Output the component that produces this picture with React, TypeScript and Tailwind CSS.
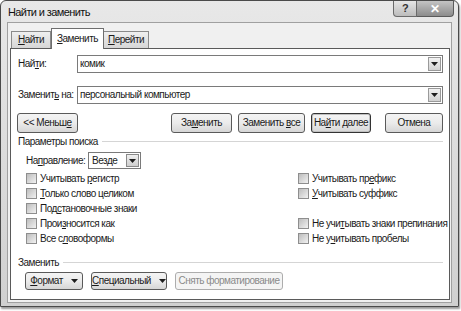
import React from 'react';

const U = ({ children }: { children: React.ReactNode }) => <span className="underline underline-offset-[1px]">{children}</span>;

// кнопка в стиле Windows 7
const Btn = ({
  w,
  h = 'h-[20px]',
  children,
  primary,
  disabled,
}: {
  w: string;
  h?: string;
  children: React.ReactNode;
  primary?: boolean;
  disabled?: boolean;
}) => (
  <div
    className={`${w} ${h} flex items-center justify-center rounded-[3px] border ${
      primary ? 'border-[#333] shadow-[inset_0_0_0_1px_#c0c0c0]' : disabled ? 'border-[#adadad]' : 'border-[#5a5a5a]'
    } ${disabled ? 'bg-[#f4f4f4] text-[#8a8a8a]' : 'bg-gradient-to-b from-[#f4f4f4] via-[#ebebeb] to-[#d6d6d6] text-[#1a1a1a]'}`}
  >
    {children}
  </div>
);

const Check = ({ children }: { children: React.ReactNode }) => (
  <div className="h-[15px] flex items-center gap-[3px]">
    <div className="w-[11px] h-[11px] border border-[#8e8e8e] bg-gradient-to-br from-[#bdbdbd] to-[#f2f2f2]" />
    <span>{children}</span>
  </div>
);

const Arrow = () => (
  <svg width="7" height="4" viewBox="0 0 7 4">
    <path d="M0 0h7L3.5 4z" fill="#1e1e1e" />
  </svg>
);

const Combo = ({ value }: { value: string }) => (
  <div className="flex-1 h-[18px] border border-[#7a7a7a] bg-white flex items-center">
    <span className="flex-1 pl-[2px]">{value}</span>
    <div className="w-[13px] h-[14px] mr-[1px] border border-[#9a9a9a] bg-gradient-to-b from-[#f2f2f2] to-[#d2d2d2] flex items-center justify-center">
      <Arrow />
    </div>
  </div>
);

const Group = ({ title }: { title: string }) => (
  <div className="h-[15px] flex items-center gap-[4px] pl-[7px]">
    <span>{title}</span>
    <div className="flex-1 h-px bg-[#d5d5d5]" />
  </div>
);

export default function App() {
  return (
    <div className="w-[461px] h-[311px] bg-white font-['Liberation_Sans',Arial,sans-serif] text-[10px] tracking-[-0.5px] text-[#1a1a1a] leading-none whitespace-nowrap">
      <div className="w-[459px] h-[307px] border border-[#4a4a4a] rounded-t-[6px] bg-gradient-to-b from-[#e8e8e8] to-[#d0d0d0] shadow-[1px_2px_2px_#9a9a9a] flex flex-col">
        {/* заголовок */}
        <div className="h-[21px] flex items-start">
          <span className="pl-[7px] pt-[6px] text-[11px] tracking-[-0.6px] text-[#111]">Найти и заменить</span>
          <div className="ml-auto mr-[4px] flex">
            <div className="w-[24px] h-[16px] border border-[#6a6a6a] border-t-0 rounded-bl-[4px] bg-gradient-to-b from-[#e6e6e6] to-[#bcbcbc] flex items-center justify-center text-[11px] font-bold text-[#333]">
              ?
            </div>
            <div className="w-[37px] h-[16px] border border-[#5a5a5a] border-t-0 border-l-0 rounded-br-[4px] bg-gradient-to-b from-[#c4c4c4] to-[#8c8c8c] flex items-center justify-center text-[12px] font-bold text-white">
              ✕
            </div>
          </div>
        </div>

        {/* клиентская область */}
        <div className="mx-[6px] h-[281px] border border-[#a0a0a0] bg-[#f0f0f0] px-[2px] pt-[5px]">
          {/* вкладки */}
          <div className="flex items-end h-[20px] pl-[1px]">
            <div className="w-[40px] h-[17px] border border-[#8a8a8a] border-b-0 bg-gradient-to-b from-[#efefef] to-[#d6d6d6] flex items-center justify-center">
              <span>
                <U>Н</U>айти
              </span>
            </div>
            <div className="w-[53px] h-[21px] border border-[#6e6e6e] border-b-0 bg-white flex items-center justify-center -mb-px relative z-10">
              <span>
                <U>З</U>аменить
              </span>
            </div>
            <div className="w-[45px] h-[17px] border border-[#8a8a8a] border-b-0 border-l-0 bg-gradient-to-b from-[#efefef] to-[#d6d6d6] flex items-center justify-center">
              <span>
                <U>П</U>ерейти
              </span>
            </div>
          </div>

          {/* панель */}
          <div className="w-[440px] h-[252px] border border-[#5a5a5a] bg-white flex flex-col">
            <div className="flex items-center h-[18px] mt-[6px] pl-[7px] pr-[6px]">
              <span className="w-[59px]">
                Най<U>т</U>и:
              </span>
              <Combo value="комик" />
            </div>
            <div className="flex items-center h-[18px] mt-[13px] pl-[7px] pr-[6px]">
              <span className="w-[59px]">
                Заменит<U>ь</U> на:
              </span>
              <Combo value="персональный компьютер" />
            </div>

            <div className="flex items-center mt-[9px] pl-[6px] pr-[6px]">
              <Btn w="w-[61px]">
                <span>
                  {'<< '}Меньш<U>е</U>
                </span>
              </Btn>
              <div className="ml-auto flex gap-[6px]">
                <Btn w="w-[61px]">
                  <span>
                    За<U>м</U>енить
                  </span>
                </Btn>
                <Btn w="w-[67px]">
                  <span>
                    Заменить <U>в</U>се
                  </span>
                </Btn>
                <Btn w="w-[60px]" primary>
                  <span>
                    На<U>й</U>ти далее
                  </span>
                </Btn>
              </div>
              <div className="ml-[14px]">
                <Btn w="w-[58px]">
                  <span>Отмена</span>
                </Btn>
              </div>
            </div>

            <div className="mt-[1px] pr-[6px]">
              <Group title="Параметры поиска" />
            </div>

            <div className="flex items-center mt-[3px] pl-[15px] h-[17px]">
              <span className="w-[62px]">
                На<U>п</U>равление:
              </span>
              <div className="w-[53px] h-[17px] border border-[#7a7a7a] bg-white flex items-center">
                <span className="flex-1 pl-[3px]">Везде</span>
                <div className="w-[13px] h-[13px] mr-[1px] border border-[#8a8a8a] bg-gradient-to-b from-[#efefef] to-[#cfcfcf] flex items-center justify-center">
                  <Arrow />
                </div>
              </div>
            </div>

            <div className="flex mt-[2px] pl-[15px]">
              <div className="w-[272px] flex flex-col">
                <Check>
                  Учитывать <U>р</U>егистр
                </Check>
                <Check>
                  <U>Т</U>олько слово целиком
                </Check>
                <Check>
                  Под<U>с</U>тановочные знаки
                </Check>
                <Check>
                  Прои<U>з</U>носится как
                </Check>
                <Check>
                  Все с<U>л</U>овоформы
                </Check>
              </div>
              <div className="flex flex-col">
                <Check>
                  Учитывать пр<U>е</U>фикс
                </Check>
                <Check>
                  <U>У</U>читывать суффикс
                </Check>
                <div className="h-[15px]" />
                <Check>
                  Не учи<U>т</U>ывать знаки препинания
                </Check>
                <Check>
                  Не у<U>ч</U>итывать пробелы
                </Check>
              </div>
            </div>

            <div className="mt-[9px] pr-[6px]">
              <Group title="Заменить" />
            </div>

            <div className="flex items-center gap-[8px] mt-[2px] pl-[14px]">
              <Btn w="w-[58px]" h="h-[18px]">
                <span>
                  <U>Ф</U>ормат
                </span>
                <span className="ml-[8px] flex">
                  <Arrow />
                </span>
              </Btn>
              <Btn w="w-[76px]" h="h-[18px]">
                <span>
                  <U>С</U>пециальный
                </span>
                <span className="ml-[8px] flex">
                  <Arrow />
                </span>
              </Btn>
              <Btn w="w-[108px]" h="h-[18px]" disabled>
                <span>Снять форматирование</span>
              </Btn>
            </div>
          </div>
        </div>
      </div>
    </div>
  );
}
